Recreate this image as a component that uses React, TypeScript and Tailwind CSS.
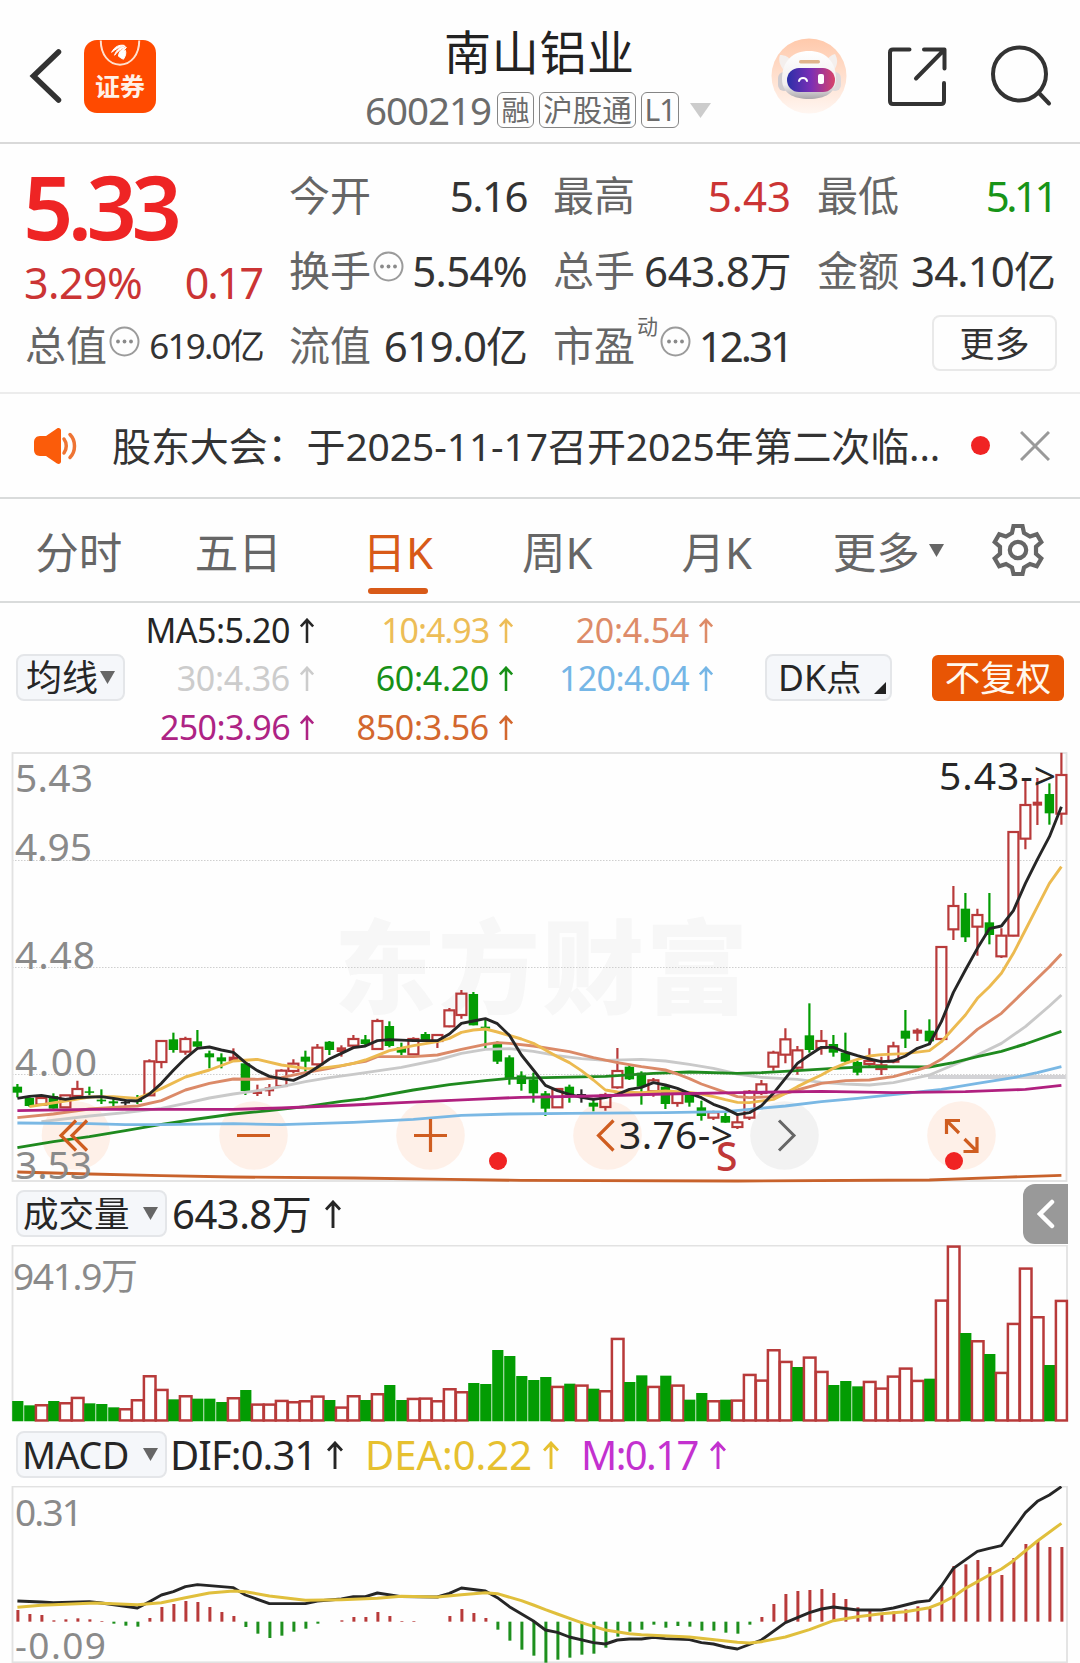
import type { ReactNode } from "react";

type Kind = "up" | "upFlat" | "down" | "flat";
type Candle = [Kind, number, number, number, number];
type Point = [number, number];

const RED = "#b83a3a";
const GREEN = "#039c03";

// Chart data is stored in thirds of a pixel on the y axis and by bar index on
// the x axis. Bars are 12px apart.
const barX = (index: number) => 17.4 + index * 12;

const U: Kind = "up";
const F: Kind = "upFlat";
const D: Kind = "down";
const K: Kind = "flat";

// kind, high, body top, body bottom, low
const CANDLES: Candle[] = [
  [D, 1032, 1040, 1058, 1072], [D, 1072, 1074, 1098, 1100], [U, 1072, 1074, 1094, 1096],
  [D, 1060, 1068, 1106, 1106], [U, 1065, 1066, 1102, 1103], [U, 1022, 1047, 1068, 1078],
  [D, 1040, 1054, 1058, 1066], [D, 1048, 1079, 1084, 1092], [D, 1075, 1084, 1090, 1099],
  [K, 1078, 1086, 1090, 1097], [D, 1065, 1080, 1086, 1092], [U, 958, 964, 1066, 1068],
  [U, 900, 903, 966, 985], [D, 878, 898, 930, 938], [U, 890, 897, 935, 944],
  [D, 870, 904, 920, 922], [D, 932, 940, 952, 985], [D, 940, 952, 964, 985],
  [F, 925, 950, 964, 966], [D, 970, 970, 1053, 1065], [F, 1034, 1054, 1062, 1068],
  [F, 1032, 1042, 1054, 1068], [U, 988, 992, 1038, 1042], [U, 958, 971, 993, 1000],
  [D, 932, 950, 965, 995], [U, 912, 923, 973, 980], [D, 903, 905, 930, 945],
  [F, 916, 922, 936, 950], [U, 885, 897, 917, 925], [D, 885, 898, 912, 920],
  [U, 836, 843, 927, 930], [D, 844, 858, 918, 922], [D, 908, 922, 938, 945],
  [U, 892, 897, 943, 944], [D, 876, 882, 900, 902], [U, 882, 885, 903, 924],
  [U, 804, 811, 859, 862], [U, 750, 761, 825, 836], [D, 756, 762, 856, 856],
  [D, 840, 860, 866, 928], [D, 904, 908, 965, 972], [D, 946, 952, 1015, 1034],
  [D, 994, 1006, 1032, 1052], [D, 998, 1018, 1060, 1088], [D, 1053, 1060, 1106, 1128],
  [U, 1045, 1047, 1102, 1104], [D, 1034, 1040, 1064, 1088], [K, 1048, 1062, 1065, 1088],
  [D, 1080, 1088, 1100, 1114], [U, 1058, 1065, 1101, 1112], [U, 924, 993, 1042, 1046],
  [D, 975, 980, 1018, 1020], [D, 994, 998, 1040, 1094], [U, 1014, 1021, 1054, 1070],
  [D, 1036, 1040, 1092, 1107], [U, 1055, 1061, 1089, 1100], [D, 1062, 1064, 1088, 1100],
  [D, 1082, 1102, 1128, 1142], [U, 1112, 1117, 1133, 1140], [D, 1118, 1128, 1148, 1148],
  [U, 1125, 1147, 1161, 1167], [U, 1050, 1055, 1133, 1140], [U, 1020, 1033, 1059, 1065],
  [U, 932, 938, 980, 992], [U, 865, 898, 944, 970], [U, 918, 931, 983, 1004],
  [D, 790, 886, 930, 938], [U, 870, 903, 924, 944], [D, 885, 912, 938, 950],
  [D, 878, 938, 965, 968], [D, 962, 966, 998, 1006], [U, 925, 963, 972, 978],
  [U, 950, 976, 987, 1005], [U, 905, 919, 965, 970], [D, 810, 872, 896, 924],
  [F, 865, 869, 881, 903], [D, 838, 872, 904, 915], [U, 619, 621, 897, 899],
  [U, 438, 498, 568, 600], [D, 459, 506, 592, 606], [U, 506, 525, 560, 647],
  [D, 459, 547, 585, 613], [U, 565, 587, 649, 654], [U, 274, 276, 587, 589],
  [U, 120, 195, 296, 328], [F, 114, 185, 197, 255], [D, 130, 162, 220, 254],
  [U, 38, 105, 221, 254],
];

const AVERAGES: { color: string; points: Point[] }[] = [
  {
    color: "#c8622c",
    points: [[0, 1296], [6, 1302], [12, 1307], [18, 1311], [28, 1314], [36, 1318], [42, 1321], [60, 1323], [76, 1320], [82, 1312], [87, 1306]],
  },
  {
    color: "#c9c9c9",
    points: [[2, 1145], [6, 1128], [9, 1118], [12, 1105], [14, 1090], [16, 1074], [18, 1062], [20, 1052], [22, 1040], [24, 1025], [26, 1013], [28, 1003], [32, 982], [35, 960], [37, 940], [39, 928], [41, 926], [43, 934], [45, 947], [47, 956], [49, 961], [52, 958], [54, 963], [56, 973], [58, 985], [60, 1002], [62, 1012], [65, 1018], [67, 1027], [69, 1032], [71, 1035], [73, 1028], [75, 1013], [76, 1005], [78, 975], [80, 945], [82, 910], [84, 860], [86, 798], [87, 765]],
  },
  {
    color: "#1f8a1f",
    points: [[0, 1223], [3, 1205], [6, 1190], [9, 1172], [12, 1153], [15, 1137], [18, 1122], [21, 1112], [24, 1100], [27, 1084], [29, 1076], [33, 1050], [36, 1034], [39, 1022], [41, 1015], [45, 1012], [49, 1009], [53, 1000], [56, 996], [60, 1000], [62, 998], [65, 992], [68, 985], [71, 980], [76, 981], [78, 968], [80, 950], [82, 934], [84, 912], [87, 874]],
  },
  {
    color: "#7ab8e4",
    points: [[0, 1149], [6, 1151], [9, 1154], [12, 1154], [18, 1151], [22, 1154], [28, 1147], [33, 1138], [37, 1126], [41, 1122], [46, 1120], [54, 1118], [59, 1115], [61, 1108], [64, 1098], [67, 1085], [70, 1075], [74, 1060], [77, 1048], [80, 1030], [83, 1013], [85, 998], [87, 980]],
  },
  {
    color: "#db8a68",
    points: [[0, 1133], [3, 1122], [6, 1107], [9, 1100], [10, 1098], [12, 1082], [14, 1050], [16, 1030], [18, 1017], [20, 1018], [22, 1013], [24, 998], [26, 985], [28, 970], [29, 964], [30, 950], [33, 950], [35, 945], [37, 928], [39, 913], [40, 908], [41, 910], [43, 918], [46, 935], [48, 953], [50, 968], [52, 980], [54, 990], [55, 1002], [56, 1016], [57, 1032], [59, 1057], [60, 1070], [61, 1073], [63, 1070], [65, 1050], [67, 1030], [69, 1022], [71, 1020], [73, 1010], [75, 990], [76, 978], [77, 958], [78, 930], [79, 900], [80, 868], [82, 820], [84, 750], [86, 680], [87, 642]],
  },
  {
    color: "#ecba50",
    points: [[1, 1100], [4, 1083], [6, 1071], [8, 1070], [10, 1075], [12, 1046], [14, 1011], [16, 990], [18, 963], [20, 958], [22, 975], [24, 985], [25, 986], [27, 977], [28, 970], [29, 960], [30, 946], [31, 932], [33, 917], [35, 905], [36, 895], [37, 877], [38, 870], [39, 867], [40, 876], [42, 897], [43, 910], [45, 950], [46, 968], [47, 992], [48, 1020], [49, 1050], [50, 1056], [52, 1058], [54, 1053], [56, 1057], [57, 1062], [58, 1070], [59, 1079], [60, 1087], [61, 1088], [63, 1078], [64, 1060], [65, 1040], [66, 1022], [67, 1005], [68, 985], [69, 970], [70, 958], [71, 948], [72, 944], [74, 941], [76, 932], [77, 905], [78, 865], [79, 825], [80, 775], [81, 740], [82, 700], [83, 640], [84, 570], [85, 500], [86, 430], [87, 380]],
  },
  {
    color: "#262626",
    points: [[0, 1075], [1, 1069], [2, 1066], [3, 1072], [4, 1078], [5, 1073], [7, 1070], [8, 1075], [9, 1081], [10, 1083], [11, 1062], [12, 1030], [13, 991], [14, 955], [15, 925], [16, 921], [17, 930], [18, 937], [19, 968], [20, 992], [21, 1009], [22, 1016], [23, 1021], [24, 1005], [25, 982], [26, 957], [27, 940], [28, 923], [29, 918], [30, 902], [31, 899], [33, 902], [35, 902], [36, 882], [37, 850], [38, 843], [39, 836], [40, 851], [41, 886], [42, 945], [43, 990], [44, 1036], [45, 1052], [46, 1063], [47, 1072], [48, 1078], [49, 1073], [50, 1063], [51, 1048], [52, 1042], [53, 1028], [54, 1035], [55, 1045], [56, 1060], [57, 1073], [58, 1093], [59, 1106], [60, 1124], [61, 1118], [62, 1097], [63, 1060], [64, 1015], [65, 970], [66, 945], [67, 922], [68, 922], [69, 936], [70, 947], [71, 957], [72, 965], [73, 963], [74, 948], [75, 925], [76, 912], [77, 845], [78, 757], [79, 690], [80, 625], [81, 566], [82, 558], [83, 512], [84, 430], [85, 358], [86, 290], [87, 200]],
  },
  {
    color: "#b0207f",
    points: [[0, 1112], [6, 1108], [18, 1108], [22, 1104], [28, 1095], [32, 1088], [38, 1078], [42, 1072], [48, 1068], [54, 1062], [60, 1058], [67, 1054], [73, 1058], [79, 1055], [84, 1048], [87, 1036]],
  },
];

// Top edge of every volume bar; the baseline is 722.
const VOLUME_BASE = 722;
const VOLUMES = [
  663, 676, 674, 663, 668, 652, 670, 672, 682, 686, 659, 587, 628, 658, 647, 656,
  656, 666, 653, 630, 672, 672, 661, 665, 662, 648, 660, 681, 647, 660, 641, 615,
  660, 655, 654, 662, 626, 635, 609, 612, 510, 528, 588, 600, 591, 619, 611, 615,
  626, 632, 475, 606, 586, 619, 587, 615, 659, 639, 662, 659, 660, 583, 600, 509,
  544, 561, 531, 574, 615, 603, 619, 604, 624, 588, 564, 601, 596, 360, 198, 459,
  482, 522, 577, 430, 264, 410, 555, 361,
];
const VOLUME_DOWN = new Set([
  0, 1, 3, 6, 7, 8, 13, 15, 16, 17, 19, 26, 29, 31, 32, 38, 39, 40, 41, 42, 43, 44,
  46, 48, 51, 52, 54, 56, 57, 59, 65, 68, 69, 70, 76, 79, 81, 86,
]);

const MACD_ZERO = 605;
const MACD_BARS = [
  35, 23, 20, 4, 7, 10, 7, 2, -6, -12, -15, 11, 44, 53, 62, 59, 44, 29, 17, -16,
  -36, -49, -42, -30, -21, -6, 0, 4, 14, 14, 29, 17, 2, 2, 0, 0, 17, 38, 26, 11,
  -24, -57, -84, -102, -123, -114, -108, -99, -96, -78, -45, -30, -24, -9, -18,
  -13, -15, -27, -27, -33, -36, -9, 14, 53, 83, 92, 95, 98, 86, 68, 43, 32, 25, 31,
  37, 46, 40, 105, 167, 172, 185, 164, 140, 191, 233, 242, 224, 224,
];
const DIF: Point[] = [
  [0, 543], [2, 546], [3, 548], [6, 545], [7, 549], [10, 564], [11, 545], [12, 525],
  [13, 515], [14, 500], [15, 494], [18, 503], [19, 525], [21, 551], [24, 551],
  [25, 543], [27, 537], [28, 530], [29, 530], [30, 519], [32, 530], [35, 531],
  [36, 520], [37, 504], [39, 513], [40, 533], [41, 560], [43, 603], [44, 630],
  [45, 637], [46, 651], [48, 668], [49, 672], [50, 660], [51, 657], [52, 657],
  [53, 652], [54, 656], [56, 659], [57, 668], [58, 672], [59, 681], [60, 687],
  [62, 660], [64, 608], [66, 578], [67, 567], [68, 561], [70, 570], [72, 570],
  [73, 564], [75, 546], [76, 542], [77, 498], [78, 445], [80, 394], [81, 385],
  [82, 377], [84, 278], [85, 244], [86, 225], [87, 200],
];
const DEA: Point[] = [
  [0, 562], [2, 556], [6.5, 549], [10, 554], [12, 548], [14, 533], [16, 519],
  [18, 513], [19, 515], [21, 528], [24, 541], [27, 539], [30, 535], [32, 529],
  [35, 531], [37, 524], [39, 518], [40, 521], [42, 542], [43, 555], [44, 569],
  [45, 582], [47, 608], [49, 630], [51, 641], [52, 644], [56, 651], [60, 667],
  [61, 669], [62, 665], [64, 651], [66, 629], [68, 602], [70, 590], [72, 581],
  [74, 575], [76, 563], [77, 549], [78, 530], [79, 505], [81, 465], [82, 447],
  [83, 422], [85, 363], [87, 310],
];

function toPoints(points: Point[], offset: number): string {
  return points.map(([i, y]) => `${barX(i)},${offset + y / 3}`).join(" ");
}

function Arrow({ className }: { className: string }) {
  return (
    <svg
      viewBox="0 0 16 28"
      preserveAspectRatio="none"
      fill="none"
      stroke="currentColor"
      strokeWidth="2.900"
      className={className}
    >
      <path d="M8 28V2M1 9.5 8 2l7 7.5" />
    </svg>
  );
}

function Triangle({ className }: { className: string }) {
  return (
    <svg viewBox="0 0 16 14" preserveAspectRatio="none" fill="currentColor" className={className}>
      <path d="M0 0h16L8 14z" />
    </svg>
  );
}

function InfoIcon() {
  return (
    <svg viewBox="0 0 31 31" className="-mt-[8px] ml-[2px] h-[31px] w-[31px] flex-none">
      <circle cx="15.5" cy="15.5" r="14" fill="none" stroke="#9b9b9b" strokeWidth="2" />
      <circle cx="9" cy="15.5" r="1.9" fill="#8a8a8a" />
      <circle cx="15.5" cy="15.5" r="1.9" fill="#8a8a8a" />
      <circle cx="22" cy="15.5" r="1.9" fill="#8a8a8a" />
    </svg>
  );
}

function Header() {
  return (
    <header className="relative flex h-36 items-center justify-between border-b-2 border-[#d9d9d9]">
      <div className="flex items-center pt-[10px] pl-[29px]">
        <svg viewBox="0 0 34 56" className="h-14 w-[34px]" fill="none" stroke="#333" strokeWidth="5.5" strokeLinecap="round">
          <path d="M29.5 4 4.5 28l25 24" />
        </svg>
        <div className="relative ml-[21px] flex h-[73px] w-[72px] items-end justify-center overflow-hidden rounded-[13px] bg-[#ff4a00] pb-[14px]">
          <svg viewBox="0 0 73 73" className="absolute inset-0 h-full w-full" fill="none">
            <path d="M17 0c0 14 8 24.500 19.500 24.500S56 14 56 0" stroke="#ffe0cf" strokeWidth="2" />
            <path d="M28 12c3-6 8-8 13-7-5 1-9 4-13 7zM31 15c2-6 6-9 11-9-4 2-8 5-11 9zM35 16c0-4 3-8 8-9-3 3-5 7-5 11zM38 18c0-4 2-7 4-8 1 3 0 6-2 9z" fill="#fff" stroke="#fff" strokeWidth="1" />
          </svg>
          <span className="text-[25px] leading-none font-bold text-[#fff1e8]">证券</span>
        </div>
      </div>

      <div className="absolute left-[365px] top-0 flex flex-col">
        <h1 className="mt-[29px] pl-[79px] text-[47px] leading-none tracking-[0.700px] text-[#222]">南山铝业</h1>
        <div className="mt-[16px] flex h-9 items-center text-[#6b6b6b]">
          <span className="w-[128px] text-[38.500px] leading-none tracking-[-1px]">600219</span>
          <span className="ml-[4px] flex h-9 w-[37px] items-center justify-center rounded-md border-[1.500px] border-[#858585] text-[28px] leading-none">融</span>
          <span className="ml-[5px] flex h-9 w-[97px] items-center justify-center rounded-md border-[1.500px] border-[#858585] text-[29.500px] leading-none">沪股通</span>
          <span className="ml-[5px] flex h-9 w-[38px] items-center justify-center rounded-md border-[1.500px] border-[#858585] text-[30px] leading-none tracking-[-1px]">L1</span>
          <Triangle className="ml-[11px] h-[15px] w-[21px] text-[#ccc]" />
        </div>
      </div>

      <div className="flex items-center pt-[10px] pr-[28px]">
        <svg viewBox="0 0 76 76" className="h-[76px] w-[76px]">
          <defs>
            <linearGradient id="halo" x1="0" y1="0" x2="0" y2="1">
              <stop offset="0" stopColor="#ffc9ab" />
              <stop offset="1" stopColor="#fff6f1" />
            </linearGradient>
            <linearGradient id="visor" x1="0" y1="0" x2="1" y2="0">
              <stop offset="0" stopColor="#2a2fa8" />
              <stop offset="0.5" stopColor="#7b2fb5" />
              <stop offset="1" stopColor="#d8436a" />
            </linearGradient>
            <linearGradient id="helmet" x1="0" y1="0" x2="0" y2="1">
              <stop offset="0" stopColor="#fff" />
              <stop offset="0.7" stopColor="#f1eeee" />
              <stop offset="1" stopColor="#aaa6ab" />
            </linearGradient>
          </defs>
          <circle cx="38" cy="38" r="37.500" fill="url(#halo)" />
          <path d="M9 17c5 0 9 2 11 6l-7 9c-4-4-6-10-4-15zM64 16c-4 1-7 4-9 7l8 9c4-5 4-11 1-16z" fill="#f4efed" />
          <rect x="7" y="34" width="12" height="19" rx="6" fill="#cfcbcf" />
          <rect x="58" y="34" width="12" height="19" rx="6" fill="#ded9db" />
          <path d="M38 13c16 0 27 10 27 28 0 14-11 20-27 20s-27-6-27-20c0-18 11-28 27-28z" fill="url(#helmet)" />
          <rect x="28" y="22" width="21" height="3.500" rx="1.700" fill="#e0b48c" />
          <rect x="16" y="30" width="48" height="24" rx="12" fill="url(#visor)" />
          <path d="M28 43c1-4 7-4 8 0" fill="none" stroke="#fff" strokeWidth="2" strokeLinecap="round" />
          <rect x="47" y="36" width="6" height="10" rx="2" fill="#fff" />
        </svg>
        <svg viewBox="0 0 60 60" className="ml-[40px] h-[60px] w-[60px]" fill="none" stroke="#333" strokeWidth="4" strokeLinecap="round" strokeLinejoin="round">
          <path d="M22.500 3.500H6q-3 0-3 3V55q0 3 3 3h48q3 0 3-3V37M37 3.500h20.500V22.500M57 4 29 32.500" />
        </svg>
        <svg viewBox="0 0 62 62" className="ml-[43px] h-[62px] w-[62px]" fill="none" stroke="#333" strokeWidth="4" strokeLinecap="round">
          <circle cx="29.500" cy="29" r="26.500" />
          <path d="M49 48l10 10.500" />
        </svg>
      </div>
    </header>
  );
}

function Stat({
  label,
  value,
  className,
  extra,
}: {
  label: string;
  value: string;
  className: string;
  extra?: ReactNode;
}) {
  return (
    <div className="flex h-[75px] items-center justify-between whitespace-nowrap">
      <div className="flex items-center text-[41px] leading-none text-[#666]">
        {label}
        {extra}
      </div>
      <span className={`leading-none ${className}`}>{value}</span>
    </div>
  );
}

function Quote() {
  return (
    <section className="grid h-[250px] grid-cols-[238px_238px_238px_238px] gap-x-[26px] border-b-2 border-[#ececec] pt-[14px] pl-[25px]">
      <div>
        <div className="-ml-[2px] flex h-[95px] items-center text-[88px] leading-none font-semibold tracking-[-5.500px] text-[#ee2424]">
          5.33
        </div>
        <div className="flex h-[55px] items-center justify-between pt-[4px] text-[43px] leading-none text-[#cb3434]">
          <span className="-ml-[1px] tracking-[-0.600px]">3.29%</span>
          <span className="mr-[1px] tracking-[-2px]">0.17</span>
        </div>
        <Stat label="总值" value="619.0亿" className="text-[35px] tracking-[-1.800px] text-[#333]" extra={<InfoIcon />} />
      </div>
      <div>
        <Stat label="今开" value="5.16" className="text-[42px] tracking-[-1.500px] text-[#333]" />
        <Stat label="换手" value="5.54%" className="text-[42px] tracking-[-0.700px] text-[#333]" extra={<InfoIcon />} />
        <Stat label="流值" value="619.0亿" className="text-[42px] tracking-[-1px] text-[#333]" />
      </div>
      <div>
        <Stat label="最高" value="5.43" className="text-[42px] text-[#cb3434]" />
        <Stat label="总手" value="643.8万" className="text-[42px] tracking-[-0.400px] text-[#333]" />
        <Stat
          label="市盈"
          value="12.31"
          className="text-[42px] tracking-[-3px] text-[#333]"
          extra={
            <>
              <span className="-mt-[38px] ml-[2px] text-[21px]">动</span>
              <InfoIcon />
            </>
          }
        />
      </div>
      <div>
        <Stat label="最低" value="5.11" className="text-[42px] tracking-[-3.500px] text-[#179417]" />
        <Stat label="金额" value="34.10亿" className="text-[42px] tracking-[-0.900px] text-[#333]" />
        <button className="mt-[7px] -mr-[2px] ml-auto flex h-[56px] w-[125px] items-center justify-center rounded-lg border-2 border-[#e9e9e9] text-[35px] leading-none text-[#333]">
          更多
        </button>
      </div>
    </section>
  );
}

function Notice() {
  return (
    <section className="flex h-[105px] items-center border-b-2 border-[#d9dbdb]">
      <svg viewBox="0 0 46 38" className="ml-[33px] h-[38px] w-[46px]" fill="none">
        <path d="M7 9h6L24 1.500c2-1 4 0 4 2v31c0 2-2 3-4 2L13 29H7c-4 0-6-3-6-6v-8c0-3 2-6 6-6z" fill="#fb5c0a" />
        <path d="M31 12c3 4 3 10 0 14M37 7.500c6 6 6 17 0 23" stroke="#ee7434" strokeWidth="3.500" strokeLinecap="round" />
      </svg>
      <p className="ml-[33px] w-[828px] text-[39px] leading-none tracking-[-0.100px] whitespace-nowrap text-[#333]">
        股东大会：于2025-11-17召开2025年第二次临...
      </p>
      <span className="ml-[31px] h-[19px] w-[19px] rounded-full bg-[#f02323]" />
      <svg viewBox="0 0 30 30" className="ml-[30px] h-[30px] w-[30px]" stroke="#999" strokeWidth="3">
        <path d="M1 1l28 28M29 1 1 29" />
      </svg>
    </section>
  );
}

const TABS = ["分时", "五日", "日K", "周K", "月K", "更多"];

function Tabs() {
  return (
    <nav className="flex h-[104px] items-center border-b-2 border-[#d9dbdb]">
      {TABS.map((tab) => (
        <div
          key={tab}
          className={`relative flex h-full w-[159.500px] items-center justify-center pt-[6px] pr-[2px] text-[43.500px] leading-none ${
            tab === "日K" ? "text-[#d85a18]" : "text-[#666]"
          }`}
        >
          {tab}
          {tab === "日K" && <span className="absolute bottom-[7px] left-[49px] h-[6px] w-[60px] rounded-full bg-[#d85a18]" />}
          {tab === "更多" && <Triangle className="absolute top-[45px] left-[131px] h-[13px] w-[15px]" />}
        </div>
      ))}
      <svg viewBox="0 0 54 54" className="ml-[34px] h-[54px] w-[54px]" fill="none" stroke="#666" strokeWidth="4.200">
        <path d="M22.500 3h9l1.500 7 6 3.500 6.800-2.300 4.500 7.800-5.300 4.700v7.100l5.300 4.700-4.500 7.800-6.800-2.300-6 3.500-1.500 6.500h-9l-1.500-6.500-6-3.500-6.800 2.300-4.500-7.800 5.300-4.700v-7.100l-5.300-4.700 4.500-7.800 6.800 2.300 6-3.500z" />
        <circle cx="27" cy="27" r="8.200" />
      </svg>
    </nav>
  );
}

const LEGEND = [
  { text: "MA5:5.20", color: "text-[#262626] tracking-[-0.500px]" },
  { text: "10:4.93", color: "text-[#edbd57] tracking-[-1.100px]" },
  { text: "20:4.54", color: "text-[#dd8b68] tracking-[-0.300px]" },
  { text: "30:4.36", color: "text-[#cccccc] tracking-[-0.300px]" },
  { text: "60:4.20", color: "text-[#179017] tracking-[-0.300px]" },
  { text: "120:4.04", color: "text-[#75b6e6] tracking-[-0.600px]" },
  { text: "250:3.96", color: "text-[#ae2384] tracking-[-0.600px]" },
  { text: "850:3.56", color: "text-[#d3672e] tracking-[-0.300px]" },
];

function Legend() {
  return (
    <section className="flex h-[149px] items-start">
      <button className="mt-[51px] ml-4 flex h-[47px] w-[109px] items-center justify-center rounded-lg border-2 border-[#e4e6e9] bg-[#f5f7fa] text-[36px] leading-none text-[#262626]">
        均线
        <Triangle className="ml-[2px] h-[13px] w-[15px] text-[#666]" />
      </button>
      <div className="ml-[9px] grid grid-cols-[180px_199px_200px] pt-[2.500px]">
        {LEGEND.map((item) => (
          <div key={item.text} className={`flex h-[48.500px] items-center justify-end text-[34px] leading-none ${item.color}`}>
            {item.text}
            <Arrow className="mt-[1px] ml-[10px] h-[25px] w-[14px]" />
          </div>
        ))}
      </div>
      <button className="relative mt-[51px] ml-[52px] flex h-[47px] w-[127px] items-center rounded-lg border-2 border-[#e4e6e9] bg-[#f5f7fa] pl-[11px] text-[35.500px] leading-none text-[#262626]">
        DK点
        <svg viewBox="0 0 12 12" className="absolute right-1 bottom-[5px] h-3 w-3">
          <path d="M12 0v12H0z" fill="#222" />
        </svg>
      </button>
      <button className="mt-[52px] ml-[40px] flex h-[46px] w-[132px] items-center justify-center rounded-md bg-[#e85504] text-[35.500px] leading-none text-[#fff8ee]">
        不复权
      </button>
    </section>
  );
}

function CandleShape({ candle, index }: { candle: Candle; index: number }) {
  const [kind, high, top, bottom, low] = candle.map((v) => (typeof v === "number" ? v / 3 : v)) as Candle;
  const x = barX(index);
  const color = kind === "down" ? GREEN : kind === "flat" ? "#262626" : RED;
  if (kind === "up") {
    return (
      <g stroke={color} strokeWidth="2.200" fill="none">
        <path d={`M${x} ${high}V${top}M${x} ${bottom}V${low}`} />
        <rect x={x - 5} y={top} width="10" height={Math.max(bottom - top, 1)} />
      </g>
    );
  }
  return (
    <g fill={color}>
      <rect x={x - 1.1} y={high} width="2.2" height={low - high} />
      <rect x={x - 4.7} y={top} width="9.4" height={Math.max(bottom - top, 1.5)} />
    </g>
  );
}

function PriceChart() {
  return (
    <svg viewBox="0 740 1080 444" className="-mt-3 block h-[444px] w-[1080px]" fontSize="39">
      <text x="334" y="1006" fontSize="102" fontWeight="900" fill="#f7f7f7" textLength="414">东方财富</text>
      <g fill="#fef0e8">
        <circle cx="76" cy="1135.500" r="34.300" />
        <circle cx="253.500" cy="1135.500" r="34.300" />
        <circle cx="430.500" cy="1135.500" r="34.300" />
        <circle cx="607.500" cy="1135.500" r="34.300" />
        <circle cx="784.500" cy="1135.500" r="34.300" fill="#f2f2f2" />
        <circle cx="961.500" cy="1135.500" r="34.300" />
      </g>
      <g stroke="#cfcfcf" strokeWidth="1" strokeDasharray="1.500 1.500">
        <path d="M12 860.500H1067M12 967.500H1067M12 1074.500H1067" />
      </g>
      <path d="M928 1077H1067" stroke="#d3d3d6" strokeWidth="4" />
      <rect x="12.500" y="753" width="1054" height="428" fill="none" stroke="#e2e2e2" strokeWidth="1.800" />

      <g transform="translate(0 740)">
        {CANDLES.map((candle, i) => (
          <CandleShape key={i} candle={candle} index={i} />
        ))}
      </g>
      {AVERAGES.map((line) => (
        <polyline key={line.color} points={toPoints(line.points, 740)} fill="none" stroke={line.color} strokeWidth="2.900" strokeLinejoin="round" />
      ))}

      <g fill="none" stroke="#cf5d20" strokeWidth="3.200">
        <path d="M76 1120.500l-15 15 15 15M87 1120.500l-15 15 15 15" />
        <path d="M237 1135.500h33M414 1135.500h33M430.500 1119v33M613.500 1120.500l-15 15 15 15" />
        <path d="M960 1120.500h-13.500v13.500M947 1121l12 12M963.500 1151.500h13.500v-14.500M976.500 1151l-12-12" />
      </g>
      <path d="M779 1120.500l15 15-15 15" fill="none" stroke="#666" strokeWidth="3" />
      <circle cx="498" cy="1161" r="9" fill="#f02323" />
      <circle cx="954" cy="1161" r="9" fill="#f02323" />

      <g fill="#8a8a8a">
        <text x="15" y="792" textLength="78">5.43</text>
        <text x="15" y="861" textLength="77">4.95</text>
        <text x="15" y="969" textLength="80">4.48</text>
        <text x="15" y="1076" textLength="82">4.00</text>
        <text x="15" y="1179" textLength="77">3.53</text>
      </g>
      <g fill="#262626">
        <text x="939" y="790" textLength="117">5.43-&gt;</text>
        <text x="619" y="1149" textLength="114">3.76-&gt;</text>
      </g>
      <text x="716" y="1171" fontWeight="500" fill="#c03838">S</text>
    </svg>
  );
}

function VolumeToolbar() {
  return (
    <section className="flex h-[61px] items-start pt-[6px]">
      <button className="ml-4 flex h-[47px] w-[151px] items-center rounded-lg border-2 border-[#e4e6e9] bg-[#f5f7fa] pl-[5px] text-[35.500px] leading-none text-[#262626]">
        成交量
        <Triangle className="ml-auto mr-[7px] h-[13px] w-[15px] text-[#666]" />
      </button>
      <div className="ml-[5px] flex h-[47px] items-center text-[40px] leading-none text-[#262626]">
        <span className="w-[153px] tracking-[-0.500px] whitespace-nowrap">643.8万</span>
        <Arrow className="h-[28px] w-4" />
      </div>
      <button className="-mt-[6px] mr-[12px] ml-auto flex h-[60px] w-[45px] items-center justify-center rounded-l-xl bg-[#999]">
        <svg viewBox="0 0 18 30" className="h-[30px] w-[18px]" fill="none" stroke="#fff" strokeWidth="4.500" strokeLinecap="round">
          <path d="M15 3 3 15l12 12" />
        </svg>
      </button>
    </section>
  );
}

function VolumeChart() {
  return (
    <svg viewBox="0 1245 1080 177" className="block h-[177px] w-[1080px]">
      <path d="M12.500 1421V1245.500H1067V1421" fill="none" stroke="#e2e2e2" strokeWidth="1.800" />
      {VOLUMES.map((v, i) => {
        const x = barX(i);
        const top = 1180 + v / 3;
        const bottom = 1180 + VOLUME_BASE / 3;
        if (VOLUME_DOWN.has(i)) {
          return <rect key={i} x={x - 5.2} y={top} width="11.200" height={bottom - top + 0.6} fill={GREEN} />;
        }
        const width = i === VOLUMES.length - 1 ? 11 : 11.6;
        return <rect key={i} x={x - 5.5} y={top + 0.6} width={width} height={bottom - top - 0.8} fill="#fff" stroke={RED} strokeWidth="2.500" />;
      })}
      <text x="13" y="1289.500" fontSize="37" fill="#8a8a8a" textLength="125">941.9万</text>
    </svg>
  );
}

function MacdToolbar() {
  return (
    <section className="flex h-16 items-start pt-[9px] text-[40px] leading-none">
      <button className="ml-4 flex h-[47px] w-[151px] items-center rounded-lg border-2 border-[#e4e6e9] bg-[#f5f7fa] pl-[4px] text-[37.500px] leading-none text-[#262626]">
        <span className="-mr-1 tracking-[-0.300px]">MACD</span>
        <Triangle className="ml-auto mr-[7px] h-[13px] w-[15px] text-[#666]" />
      </button>
      <div className="ml-[3px] flex h-[47px] items-center text-[#262626]">
        <span className="w-[157px] tracking-[-0.900px] whitespace-nowrap">DIF:0.31</span>
        <Arrow className="h-[28px] w-4" />
      </div>
      <div className="ml-[22px] flex h-[47px] items-center text-[#e6c02f]">
        <span className="w-[178px] whitespace-nowrap">DEA:0.22</span>
        <Arrow className="h-[28px] w-4" />
      </div>
      <div className="ml-[22px] flex h-[47px] items-center text-[#c331cf]">
        <span className="w-[129px] tracking-[-1.600px] whitespace-nowrap">M:0.17</span>
        <Arrow className="h-[28px] w-4" />
      </div>
    </section>
  );
}

function MacdChart() {
  const zero = 1420 + MACD_ZERO / 3;
  return (
    <svg viewBox="0 1486 1080 177" className="block h-[177px] w-[1080px]">
      <rect x="12.500" y="1486.500" width="1054.500" height="175.800" fill="none" stroke="#e2e2e2" strokeWidth="1.800" />
      {MACD_BARS.map((v, i) =>
        v === 0 ? null : (
          <rect
            key={i}
            x={barX(i) - 1}
            y={v > 0 ? zero - v / 3 : zero}
            width="3"
            height={Math.abs(v) / 3}
            fill={v > 0 ? RED : "#1d8f1d"}
          />
        ),
      )}
      <polyline points={toPoints(DIF, 1420)} fill="none" stroke="#262626" strokeWidth="2.900" strokeLinejoin="round" />
      <polyline points={toPoints(DEA, 1420)} fill="none" stroke="#e0bf3c" strokeWidth="3" strokeLinejoin="round" />
      <g fontSize="37" fill="#8a8a8a">
        <text x="15" y="1526" textLength="68">0.31</text>
        <text x="15" y="1659" textLength="91">-0.09</text>
      </g>
    </svg>
  );
}

export default function App() {
  return (
    <main className="h-[1663px] w-[1080px] overflow-hidden bg-[#fefefe] font-['Noto_Sans','Noto_Sans_CJK_SC',sans-serif]">
      <Header />
      <Quote />
      <Notice />
      <Tabs />
      <Legend />
      <PriceChart />
      <VolumeToolbar />
      <VolumeChart />
      <MacdToolbar />
      <MacdChart />
    </main>
  );
}
